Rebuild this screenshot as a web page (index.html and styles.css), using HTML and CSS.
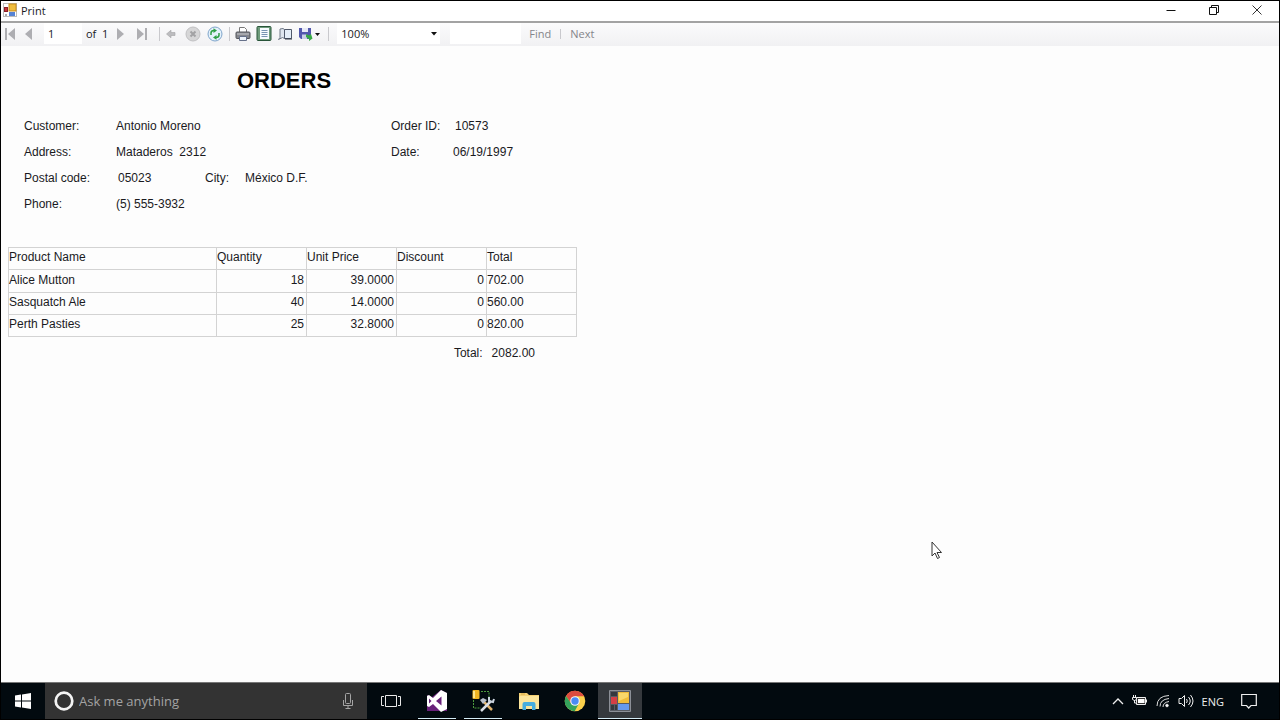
FILE: index.html
```html
<!DOCTYPE html>
<html lang="en">
<head>
<meta charset="utf-8">
<title>Print</title>
<link rel="stylesheet" href="styles.css">
</head>
<body>
<div class="window">
  <header class="titlebar">
    <svg class="app-icon" viewBox="0 0 14 14"><rect x=".5" y=".5" width="13" height="13" fill="#fff" stroke="#bbb"/><rect x="6" y="1" width="7" height="7" fill="#efbd3e" stroke="#c98d1d"/><rect x="1.500" y="4.500" width="3" height="4" fill="#c5343c" stroke="#8b2028"/><rect x="6" y="9" width="6" height="4" fill="#5683d4"/><path d="M2 11h2v2H2z" fill="#aaa"/></svg>
    <h1 class="window-title">Print</h1>
    <div class="window-buttons">
      <button aria-label="Minimize"><svg width="12" height="12" viewBox="0 0 12 12"><path d="M1.500 6.500h9" stroke="#111"/></svg></button>
      <button aria-label="Restore"><svg width="12" height="12" viewBox="0 0 12 12" fill="none" stroke="#111"><path d="M1.500 3.500h7v7h-7zM3.500 3.500v-2h7v7h-2"/></svg></button>
      <button aria-label="Close"><svg width="12" height="12" viewBox="0 0 12 12"><path d="M1.500 1.500l9 9M10.500 1.500l-9 9" stroke="#333"/></svg></button>
    </div>
  </header>

  <div class="toolbar" role="toolbar" aria-label="Report">
    <div class="group pager">
      <button aria-label="First page"><svg width="12" height="14" viewBox="0 0 12 14" fill="#aeaeb2"><path d="M1 1h2v12H1zM11 1v12L4 7z"/></svg></button>
      <button aria-label="Previous page"><svg width="12" height="14" viewBox="0 0 12 14" fill="#aeaeb2"><path d="M10 1v12L3 7z"/></svg></button>
      <input class="page-box" aria-label="Current page" value="1">
      <span class="page-count">of&nbsp; 1</span>
      <button aria-label="Next page"><svg width="12" height="14" viewBox="0 0 12 14" fill="#aeaeb2"><path d="M3 1v12l7-6z"/></svg></button>
      <button aria-label="Last page"><svg width="12" height="14" viewBox="0 0 12 14" fill="#aeaeb2"><path d="M1 1v12l7-6zM9 1h2v12H9z"/></svg></button>
    </div>
    <span class="separator"></span>
    <div class="group actions">
      <button aria-label="Back"><svg width="16" height="16" viewBox="0 0 16 16"><path d="M3.500 8L8 4.200V6.500h4v3H8v2.300z" fill="#bcbcbf" stroke="#a2a2a5" stroke-width=".6"/></svg></button>
      <button aria-label="Stop"><svg width="16" height="16" viewBox="0 0 16 16"><circle cx="8" cy="8" r="7" fill="#d6d6d7" stroke="#c0c0c2"/><path d="M5.500 5.500l5 5m0-5l-5 5" stroke="#a2a2a4" stroke-width="2"/></svg></button>
      <button aria-label="Refresh"><svg width="16" height="16" viewBox="0 0 16 16"><circle cx="8" cy="8" r="7" fill="#e4f1fb" stroke="#7fa5cb"/><path d="M4 9V7q0-2.500 3-2.500M12 7v2q0 2.500-3 2.500" fill="none" stroke="#2fa046" stroke-width="1.500"/><path d="M6.500 2.200L10 4.500 6.500 7zM9.500 9L6 11.500 9.500 13.800z" fill="#2fa046"/></svg></button>
    </div>
    <span class="separator"></span>
    <div class="group outputs">
      <button aria-label="Print"><svg width="16" height="16" viewBox="0 0 16 16"><path d="M4.500 1.500h5l2 2V7h-7z" fill="#fff" stroke="#777"/><rect x="1" y="6" width="14" height="6.500" rx="1" fill="#85878d" stroke="#55575d"/><path d="M2 8h12" stroke="#c9cace"/><path d="M4.500 10.500h7v4h-7z" fill="#eef4fb" stroke="#66718a"/></svg></button>
      <button aria-label="Print layout"><svg width="16" height="16" viewBox="0 0 16 16"><rect x="1" y=".5" width="14" height="14" rx="1" fill="#6f9c7c" stroke="#285439"/><rect x="4" y="2" width="9" height="11" fill="#f7fbff"/><path d="M5.500 4.500h6m-6 2h6m-6 2h6m-6 2h6" stroke="#7894b3"/></svg></button>
      <button aria-label="Page setup"><svg width="16" height="16" viewBox="0 0 16 16"><path d="M1.500 13.500l1.500-2V3l3-.5 1.500 1v9l-2-1z" fill="#dfe6ef" stroke="#707987"/><path d="M7.500 3.500h7v9h-7z" fill="#e5eef8" stroke="#50596b"/><path d="M8 13h7" stroke="#303847"/></svg></button>
      <button class="export" aria-label="Export"><svg width="24" height="16" viewBox="0 0 24 16"><path d="M1 2h12v11H3l-2-2z" fill="#5258ad"/><path d="M4 2h6v4H4z" fill="#e5e8f6"/><path d="M4 8.500h5V13H4z" fill="#c9cde7"/><path d="M8 8l3 1.500 2-1.500 1.500 4.500L11 15v-2L8 11z" fill="#36a945"/><path d="M17 7h5l-2.500 3z" fill="#111"/></svg></button>
    </div>
    <span class="separator"></span>
    <div class="group zoom">
      <select aria-label="Zoom"><option>100%</option></select>
      <svg class="arrow" width="6" height="4" viewBox="0 0 6 4"><path d="M0 0h6L3 3.500z" fill="#111"/></svg>
    </div>
    <input class="find-box" aria-label="Find text">
    <button class="text-button">Find</button>
    <span class="divider"></span>
    <button class="text-button">Next</button>
  </div>

  <main class="report">
    <h2 class="report-title">ORDERS</h2>
    <dl class="fields">
      <dt>Customer:</dt><dd class="wide">Antonio Moreno</dd><dt>Order ID:</dt><dd class="inset">10573</dd>
      <dt>Address:</dt><dd class="wide address">Mataderos  2312</dd><dt>Date:</dt><dd>06/19/1997</dd>
      <dt>Postal code:</dt><dd class="inset">05023</dd><dt>City:</dt><dd class="wide">México D.F.</dd>
      <dt>Phone:</dt><dd class="wide">(5) 555-3932</dd>
    </dl>
    <table class="items">
      <thead><tr><th class="name">Product Name</th><th>Quantity</th><th>Unit Price</th><th>Discount</th><th>Total</th></tr></thead>
      <tbody>
        <tr><td>Alice Mutton</td><td class="num">18</td><td class="num">39.0000</td><td class="num">0</td><td>702.00</td></tr>
        <tr><td>Sasquatch Ale</td><td class="num">40</td><td class="num">14.0000</td><td class="num">0</td><td>560.00</td></tr>
        <tr><td>Perth Pasties</td><td class="num">25</td><td class="num">32.8000</td><td class="num">0</td><td>820.00</td></tr>
      </tbody>
    </table>
    <p class="grand-total"><span>Total:</span><span>2082.00</span></p>
  </main>
</div>

<footer class="taskbar">
  <button class="start" aria-label="Start"><svg width="16" height="16" viewBox="0 0 16 16" fill="#fff"><path d="M0 2.500l6-.9v6H0zM7 1.400l9-1.300v7.500H7zM0 8.400h6v6l-6-.8zM7 8.400h9v7.500l-9-1.300z"/></svg></button>
  <div class="search">
    <svg width="20" height="20" viewBox="0 0 20 20"><circle cx="10" cy="10" r="8.300" fill="none" stroke="#f4f4f4" stroke-width="2.700"/></svg>
    <input aria-label="Search" placeholder="Ask me anything">
    <button aria-label="Voice search"><svg width="12" height="16" viewBox="0 0 12 16" fill="none" stroke="#a5a5a5"><rect x="3.500" y=".5" width="5" height="10" rx="1"/><path d="M1.500 7v5.500h9V7M6 12.500V15M3.500 15.500h5"/></svg></button>
  </div>
  <nav class="apps" aria-label="Applications">
    <button aria-label="Task view"><svg width="20" height="14" viewBox="0 0 20 14" fill="none" stroke="#e8e8e8"><path d="M4.500 1.500h11v11h-11zM3 2.500H.5v9H3M17 2.500h2.500v9H17"/></svg></button>
    <button class="running" aria-label="Visual Studio"><svg width="22" height="22" viewBox="0 0 22 22"><path d="M1 5l5 2 9-7 6 3v18H1z" fill="#68217a"/><path fill-rule="evenodd" d="M15 0l6 3v16l-6 3-8-8-4 3-2-1V6l2-1 4 3zM15.500 6.500L10 11l5.500 4.500zM3 8.500v5L5.500 11z" fill="#fff"/></svg></button>
    <button class="running" aria-label="Database tools"><svg width="24" height="24" viewBox="0 0 24 24"><path d="M10 2.500h8v6M2.500 11v8H10" fill="none" stroke="#4d9a3c" stroke-dasharray="2 1"/><rect x="1.500" y="1" width="7" height="9" rx="1" fill="#f0b522"/><path d="M3 2v7" stroke="#ffe68c" stroke-width="2"/><path d="M12 12l9 9" stroke="#e0b26c" stroke-width="2.500"/><path d="M9 11l3-2 4 2-4 4z" fill="#b8c0cb"/><path d="M10 22l10-10" stroke="#d8dde5" stroke-width="2.500"/><path d="M18 8v4l4 1 1-3" fill="none" stroke="#cbd3de" stroke-width="2"/></svg></button>
    <button aria-label="File Explorer"><svg width="22" height="22" viewBox="0 0 22 22"><path d="M1 3h8l2 2h10v14H1z" fill="#f3cf72"/><path d="M2 6h19v13H1V7z" fill="#fce59a"/><path d="M4.500 20v-6q0-2 2-2h9q2 0 2 2v6H14v-4H8v4z" fill="#47addd"/><path d="M3 4h4" stroke="#d6a844"/></svg></button>
    <button aria-label="Chrome"><svg width="22" height="22" viewBox="0 0 22 22"><circle cx="11" cy="11" r="10.300" fill="#fbd14b"/><path d="M2 6A10.300 10.300 0 0 1 20.200 6.300H11L7 13.300z" fill="#dc4c3f"/><path d="M2 6A10.300 10.300 0 0 0 10.700 21.300L15 13.300H7z" fill="#35a35b"/><circle cx="11" cy="11" r="4.800" fill="#f6f7f8"/><circle cx="11" cy="11" r="3.700" fill="#4a8af4"/></svg></button>
    <button class="running active" aria-label="Print"><svg width="22" height="22" viewBox="0 0 22 22"><path d="M.5.500h21v21H.5z" fill="#575b63" stroke="#8c9097"/><path d="M9 2h11v11H9z" fill="#f1bd39"/><path d="M10 3h9v4l-9 4z" fill="#f9d86a"/><path d="M2 7h6v7H2z" fill="#d43f46"/><path d="M9 14h11v6H9z" fill="#6699ed"/><path d="M2 2h6v4H2zM2 15h3v5H2zM6 15h2v5H6z" fill="#35383e"/></svg></button>
  </nav>
  <div class="tray">
    <button aria-label="Hidden icons"><svg width="12" height="8" viewBox="0 0 12 8"><path d="M1 7l5-5 5 5" fill="none" stroke="#eee" stroke-width="1.300"/></svg></button>
    <button aria-label="Battery"><svg width="16" height="12" viewBox="0 0 16 12"><path d="M4.500 2.500h9v7h-9z" fill="#333" stroke="#eee"/><path d="M6 4h6.500v4H6z" fill="#fff"/><path d="M14.500 4.500v3" stroke="#eee"/><path d="M1.500 0v3M3.500 0v3M.5 2.500h4v2l-2 1-2-1zM2.500 5v3h2" stroke="#eee" fill="#020a0f"/></svg></button>
    <button aria-label="Network"><svg width="14" height="14" viewBox="0 0 14 14" fill="none" stroke="#ddd"><path d="M1 12Q1 2 13 1.500M4 12.500Q4 5.500 13 4.500M7 13Q7 8.500 13 7.500"/><circle cx="11" cy="11.500" r="1.300" fill="#fff"/></svg></button>
    <button aria-label="Volume"><svg width="16" height="14" viewBox="0 0 16 14" fill="none" stroke="#eee"><path d="M1 4.500h2.500l3-3v11l-3-3H1zM8.500 5q1.500 2 0 4M10.500 3q3.500 4 0 8M12.500 1q5 6 0 12"/></svg></button>
    <button class="language">ENG</button>
    <button aria-label="Notifications"><svg width="16" height="16" viewBox="0 0 16 16"><path d="M.7 1.500h14.600v11H10L7.700 15l-2.200-2.500H.7z" fill="none" stroke="#eee" stroke-width="1.200"/></svg></button>
  </div>
</footer>

<svg class="pointer" width="12" height="19" viewBox="0 0 12 19"><path d="M1 1v14l3-3 2.500 5.500 2-1L6 11.500h4.500z" fill="#fff" stroke="#333"/></svg>
</body>
</html>
```
FILE: styles.css
```css
* { box-sizing: border-box; }

body {
  margin: 0;
  min-height: 100vh;
  display: flex;
  flex-direction: column;
  background: #000;
  color: #1a1a1e;
  font-family: "Open Sans", "Noto Sans", sans-serif;
  font-size: 11px;
}

button, input, select {
  margin: 0;
  padding: 0;
  border: 0;
  border-radius: 0;
  background: none;
  color: inherit;
  font: inherit;
  outline: 0;
}

button {
  display: flex;
  flex: none;
  align-items: center;
  justify-content: center;
}

svg { display: block; flex: none; }

.window {
  flex: 1;
  display: flex;
  flex-direction: column;
  margin: 1px 1px 0;
  background: #fdfdfd;
}

.titlebar {
  display: flex;
  align-items: center;
  height: 22px;
  padding: 0 1px 2px 2px;
  border-bottom: 2px solid #a3a3a3;
  background: #fff;
}

.app-icon { width: 14px; height: 14px; }

.window-title {
  margin: 0 auto 0 4px;
  font-size: 11px;
  font-weight: 400;
}

.window-buttons { display: flex; }
.window-buttons button { width: 43px; height: 18px; }

.toolbar {
  display: flex;
  align-items: center;
  height: 23px;
  padding-bottom: 2px;
  background: linear-gradient(#fbfbfc, #f1f1f3);
}

.group { display: flex; align-items: center; }
.separator { width: 1px; height: 14px; background: #c9c9cd; }
.pager { padding-left: 2px; }
.pager button { width: 22px; }
.pager button:first-child { width: 14px; }
.page-box { width: 38px; height: 21px; margin-left: 5px; padding-left: 4px; background: #fff; }
.page-count { margin: 0 1px 0 4px; }
.pager + .separator { margin-left: 6px; }
.actions { margin: 0 6px 0 3px; gap: 6px; }
.outputs { margin: 0 6px 0 5px; gap: 5px; }
.zoom { position: relative; margin-left: 8px; }

.zoom select {
  width: 103px;
  height: 21px;
  padding-left: 4px;
  appearance: none;
  background: #fff;
}

.arrow { position: absolute; right: 3px; top: 9px; pointer-events: none; }

.find-box { width: 71px; height: 21px; margin: 0 8px 0 10px; background: #fff; }
.text-button { color: #85858a; }
.divider { width: 1px; height: 10px; margin: 0 9px; background: #c9c9cd; }

.report {
  flex: 1;
  padding: 22px 7px 0;
  font-family: "Liberation Sans", Arial, sans-serif;
  font-size: 12px;
}

.report-title {
  width: 552px;
  margin: 0;
  color: #000;
  font-size: 22px;
  line-height: 26px;
  text-align: center;
}

.fields {
  display: grid;
  grid-template-columns: 92px 89px 40px 146px 62px auto;
  grid-auto-rows: 26px;
  align-items: center;
  justify-content: start;
  margin: 19px 0 0 16px;
}

.fields dd { margin: 0; }
.fields .wide { grid-column: span 3; }
.fields .inset { padding-left: 2px; }
.address { white-space: pre; }

.items {
  width: 568px;
  margin-top: 30px;
  border-collapse: collapse;
  table-layout: fixed;
}

.items tr { height: 22px; }
.items tbody tr:first-child { height: 23px; }

.items th, .items td {
  padding: 0 2px 3px 0;
  border: 1px solid #d3d3d3;
  font-weight: 400;
  line-height: 16px;
  text-align: left;
}

.items th { width: 90px; }
.items .name { width: 208px; }
.items .num { text-align: right; }

.grand-total {
  display: flex;
  justify-content: flex-end;
  gap: 9px;
  width: 527px;
  margin: 9px 0 0;
}

.taskbar {
  display: flex;
  height: 38px;
  margin: 0 1px;
  border-top: 1px solid #777;
  border-bottom: 1px solid #000;
  background: #020a0f;
  color: #eee;
}

.start { width: 44px; }

.search {
  display: flex;
  align-items: center;
  width: 322px;
  padding: 0 13px 0 9px;
  background: #333;
}

.search input {
  flex: 1;
  min-width: 0;
  margin-left: 5px;
  font-size: 13px;
}

.search input::placeholder { color: #a3a3a3; opacity: 1; }

.apps { display: flex; }
.apps button { width: 46px; }
.apps button:first-child { width: 47px; }
.apps button:last-child { width: 44px; }
.running { position: relative; }

.running::after {
  content: "";
  position: absolute;
  right: 4px;
  bottom: 0;
  left: 4px;
  height: 1px;
  background: #d5edf7;
}

.apps .active { background: #35393d; }
.active::after { right: 0; left: 0; }

.tray {
  display: flex;
  align-items: center;
  gap: 8px;
  margin-left: auto;
  padding-right: 22px;
}

.language { margin-right: 9px; font-size: 11px; }

.pointer { position: absolute; left: 931px; top: 541px; }
```
